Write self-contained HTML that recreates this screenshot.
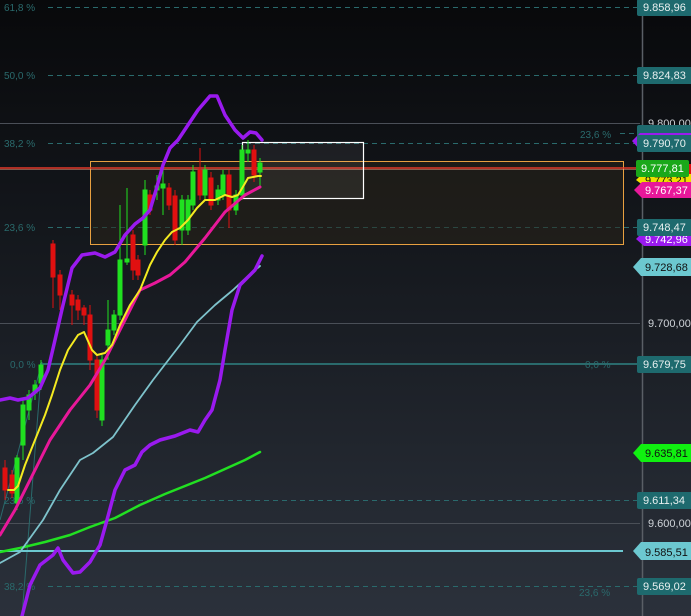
<!DOCTYPE html>
<html><head><meta charset="utf-8"><style>
html,body{margin:0;padding:0;width:691px;height:616px;overflow:hidden;background:#14171c}
svg{display:block}
text{font-family:"Liberation Sans",sans-serif}
</style></head><body>
<svg width="691" height="616" viewBox="0 0 691 616" xmlns="http://www.w3.org/2000/svg">
<defs>
<linearGradient id="bg" x1="0" y1="0" x2="0" y2="1">
<stop offset="0" stop-color="#08090b"/><stop offset="0.35" stop-color="#13161b"/><stop offset="1" stop-color="#2b313b"/>
</linearGradient>
</defs>
<rect width="691" height="616" fill="url(#bg)"/>
<g stroke="#4a4f57" stroke-width="1">
<line x1="0" y1="123.5" x2="640" y2="123.5"/>
<line x1="0" y1="323.5" x2="640" y2="323.5"/>
<line x1="0" y1="523.5" x2="640" y2="523.5"/>
</g>
<g stroke="#2a6a6c" stroke-width="1" stroke-dasharray="5,4">
<line x1="48" y1="7.5" x2="640" y2="7.5"/>
<line x1="48" y1="75.5" x2="640" y2="75.5"/>
<line x1="48" y1="143.5" x2="640" y2="143.5"/>
<line x1="48" y1="227.5" x2="640" y2="227.5"/>
<line x1="48" y1="500.5" x2="640" y2="500.5"/>
<line x1="48" y1="586.5" x2="640" y2="586.5"/>
<line x1="620" y1="133.5" x2="640" y2="133.5"/>
</g>
<line x1="40" y1="364" x2="640" y2="364" stroke="#2a6a6c" stroke-width="2"/>
<g fill="#2a6a6c" font-size="10">
<text x="4" y="11">61,8 %</text><text x="4" y="79">50,0 %</text><text x="4" y="147">38,2 %</text><text x="4" y="231">23,6 %</text>
<text x="10" y="368">0,0 %</text><text x="4" y="504">23,6 %</text><text x="4" y="590">38,2 %</text>
<text x="580" y="138">23,6 %</text><text x="585" y="368">0,0 %</text><text x="579" y="596">23,6 %</text>
</g>
<rect x="90.5" y="161.5" width="533" height="83" fill="#2a2418" fill-opacity="0.5" stroke="#e8a040" stroke-width="1"/>
<line x1="0" y1="168" x2="637" y2="168" stroke="#e23a2a" stroke-width="1.5"/>
<line x1="0" y1="169.5" x2="637" y2="169.5" stroke="#f0a080" stroke-width="0.6"/>
<rect x="242.5" y="142.5" width="121" height="56" fill="#ffffff" fill-opacity="0.06" stroke="#ffffff" stroke-width="1.2"/>
<polyline points="0,520 42,362 22,616" fill="none" stroke="#2a6a6c" stroke-width="1"/>
<g stroke-width="1">
<g stroke="#e01010" fill="#e01010">
<line x1="5" y1="460" x2="5" y2="500"/><rect x="3" y="468" width="4" height="22"/>
<line x1="12" y1="470" x2="12" y2="498"/><rect x="10" y="475" width="4" height="18"/>
<line x1="53" y1="240" x2="53" y2="308"/><rect x="51" y="244" width="4" height="33"/>
<line x1="60" y1="270" x2="60" y2="310"/><rect x="58" y="275" width="4" height="20"/>
<line x1="72" y1="290" x2="72" y2="325"/><rect x="70" y="295" width="4" height="10"/>
<line x1="78" y1="295" x2="78" y2="320"/><rect x="76" y="300" width="4" height="10"/>
<line x1="84" y1="305" x2="84" y2="325"/><rect x="82" y="308" width="4" height="7"/>
<line x1="90" y1="305" x2="90" y2="370"/><rect x="88" y="315" width="4" height="45"/>
<line x1="97" y1="355" x2="97" y2="418"/><rect x="95" y="360" width="4" height="50"/>
<line x1="133" y1="230" x2="133" y2="280"/><rect x="131" y="235" width="4" height="35"/>
<line x1="138" y1="255" x2="138" y2="280"/><rect x="136" y="260" width="4" height="15"/>
<line x1="150" y1="190" x2="150" y2="215"/><rect x="148" y="195" width="4" height="15"/>
<line x1="169" y1="183" x2="169" y2="210"/><rect x="167" y="188" width="4" height="17"/>
<line x1="175" y1="190" x2="175" y2="245"/><rect x="173" y="196" width="4" height="44"/>
<line x1="200" y1="148" x2="200" y2="200"/><rect x="198" y="170" width="4" height="25"/>
<line x1="211" y1="172" x2="211" y2="210"/><rect x="209" y="178" width="4" height="27"/>
<line x1="229" y1="170" x2="229" y2="228"/><rect x="227" y="175" width="4" height="35"/>
<line x1="254" y1="145" x2="254" y2="182"/><rect x="252" y="150" width="4" height="25"/>
</g>
<g stroke="#20e020" fill="#20e020">
<line x1="17" y1="455" x2="17" y2="510"/><rect x="15" y="458" width="4" height="45"/>
<line x1="23" y1="400" x2="23" y2="460"/><rect x="21" y="405" width="4" height="40"/>
<line x1="29" y1="390" x2="29" y2="420"/><rect x="27" y="395" width="4" height="15"/>
<line x1="35" y1="380" x2="35" y2="400"/><rect x="33" y="385" width="4" height="8"/>
<line x1="41" y1="360" x2="41" y2="390"/><rect x="39" y="365" width="4" height="18"/>
<line x1="102" y1="355" x2="102" y2="426"/><rect x="100" y="360" width="4" height="60"/>
<line x1="108" y1="300" x2="108" y2="360"/><rect x="106" y="330" width="4" height="15"/>
<line x1="114" y1="310" x2="114" y2="335"/><rect x="112" y="315" width="4" height="15"/>
<line x1="120" y1="205" x2="120" y2="320"/><rect x="118" y="260" width="4" height="55"/>
<line x1="127" y1="188" x2="127" y2="265"/><rect x="125" y="259" width="4" height="3"/>
<line x1="145" y1="180" x2="145" y2="255"/><rect x="143" y="190" width="4" height="55"/>
<line x1="157" y1="175" x2="157" y2="200"/><rect x="155" y="186" width="4" height="4"/>
<line x1="163" y1="170" x2="163" y2="215"/><rect x="161" y="184" width="4" height="4"/>
<line x1="182" y1="195" x2="182" y2="245"/><rect x="180" y="200" width="4" height="30"/>
<line x1="188" y1="195" x2="188" y2="235"/><rect x="186" y="200" width="4" height="30"/>
<line x1="193" y1="165" x2="193" y2="210"/><rect x="191" y="172" width="4" height="33"/>
<line x1="205" y1="165" x2="205" y2="200"/><rect x="203" y="170" width="4" height="25"/>
<line x1="218" y1="185" x2="218" y2="205"/><rect x="216" y="190" width="4" height="10"/>
<line x1="223" y1="170" x2="223" y2="200"/><rect x="221" y="175" width="4" height="20"/>
<line x1="236" y1="190" x2="236" y2="215"/><rect x="234" y="195" width="4" height="15"/>
<line x1="242" y1="145" x2="242" y2="200"/><rect x="240" y="150" width="4" height="45"/>
<line x1="248" y1="140" x2="248" y2="162"/><rect x="246" y="150" width="4" height="3"/>
<line x1="260" y1="158" x2="260" y2="188"/><rect x="258" y="163" width="4" height="9"/>
</g>
</g>
<line x1="0" y1="551" x2="623" y2="551" stroke="#6cc8d0" stroke-width="2"/>
<g fill="none" stroke-linejoin="round" stroke-linecap="round">
<polyline stroke="#22e022" stroke-width="2.5" points="0,552 20,548 45,542 70,535 90,527 115,518 140,505 165,494 185,486 205,478 225,469 245,460 260,452"/>
<polyline stroke="#7ec3cc" stroke-width="1.8" points="0,563 20,552 43,520 60,490 80,460 93,453 113,437 135,405 153,380 163,367 180,345 197,322 215,305 233,290 248,276 260,266"/>
<polyline stroke="#e8189a" stroke-width="3" points="0,535 15,510 35,470 50,440 70,410 90,385 105,360 120,330 140,290 155,283 170,275 185,262 205,238 225,212 245,195 260,187"/>
<polyline stroke="#f4ea20" stroke-width="2" points="8,490 14,490 18,486 25,465 35,440 45,415 52,395 60,370 68,350 78,335 84,332 92,350 97,355 105,353 112,345 120,325 130,305 140,290 150,265 157,252 165,240 172,232 180,228 188,220 197,208 205,200 215,200 225,195 232,197 238,195 244,185 248,178 258,176 261,176"/>
<polyline stroke="#9a1aef" stroke-width="3.5" points="0,400 10,398 18,400 28,398 40,388 48,370 55,340 63,305 72,268 82,255 95,253 105,257 115,252 125,235 135,224 143,218 150,210 156,190 163,165 170,148 178,140 186,128 198,110 210,96 217,96 225,115 235,130 243,138 250,132 256,133 262,140"/>
<polyline stroke="#9a1aef" stroke-width="3.5" points="22,616 30,585 40,565 53,555 58,548 63,560 73,573 80,572 90,562 100,545 107,520 115,490 125,470 135,465 142,452 150,445 160,440 175,436 190,430 198,432 205,420 212,410 220,380 225,350 232,310 240,285 245,280 255,270 262,256"/>
</g>
<line x1="642.5" y1="0" x2="642.5" y2="616" stroke="#5a5f66" stroke-width="1.5"/>
<g font-size="11" fill="#cfd3d8">
<text x="648" y="127">9.800,00</text>
<text x="648" y="327">9.700,00</text>
<text x="648" y="527">9.600,00</text>
</g>
<g font-size="11">
<rect x="637" y="-1" width="56" height="17" rx="2" fill="#1e6a6e"/><text x="643" y="11" fill="#e8f0f0">9.858,96</text>
<rect x="637" y="67" width="56" height="17" rx="2" fill="#1e6a6e"/><text x="643" y="79" fill="#e8f0f0">9.824,83</text>
<polygon points="636,180 644,172 691,172 691,186 644,186" fill="#f0e000"/><text x="645" y="184" fill="#111">9.773,21</text>
<polygon points="634,190 642,182 691,182 691,198 642,198" fill="#e8189a"/><text x="645" y="194" fill="#fff">9.767,37</text>
<polygon points="636,239 644,231 691,231 691,246 644,246" fill="#9a1aef"/><text x="645" y="243" fill="#fff">9.742,96</text>
<rect x="637" y="125" width="56" height="12" rx="2" fill="#1e6a6e"/>
<polygon points="632,141 640,133 691,133 691,150 640,150" fill="#9a1aef"/>
<rect x="637" y="135" width="56" height="17" rx="2" fill="#1e6a6e"/><text x="643" y="147" fill="#e8f0f0">9.790,70</text>
<rect x="637" y="164" width="56" height="10" fill="#e01010"/>
<rect x="636" y="160" width="53" height="17" rx="2" fill="#1aa81a"/><text x="641" y="172" fill="#fff">9.777,81</text>
<rect x="637" y="219" width="56" height="17" rx="2" fill="#1e6a6e"/><text x="643" y="231" fill="#e8f0f0">9.748,47</text>
<polygon points="633,267 641,258 691,258 691,276 641,276" fill="#6cc8d0"/><text x="645" y="271" fill="#111">9.728,68</text>
<rect x="637" y="356" width="56" height="17" rx="2" fill="#1e6a6e"/><text x="643" y="368" fill="#e8f0f0">9.679,75</text>
<polygon points="633,453 641,444 691,444 691,462 641,462" fill="#10f010"/><text x="645" y="457" fill="#111">9.635,81</text>
<rect x="637" y="492" width="56" height="17" rx="2" fill="#1e6a6e"/><text x="643" y="504" fill="#e8f0f0">9.611,34</text>
<polygon points="633,551 641,542 691,542 691,560 641,560" fill="#6cc8d0"/><text x="645" y="556" fill="#111">9.585,51</text>
<rect x="637" y="578" width="56" height="17" rx="2" fill="#1e6a6e"/><text x="643" y="590" fill="#e8f0f0">9.569,02</text>
</g>
</svg>
</body></html>
